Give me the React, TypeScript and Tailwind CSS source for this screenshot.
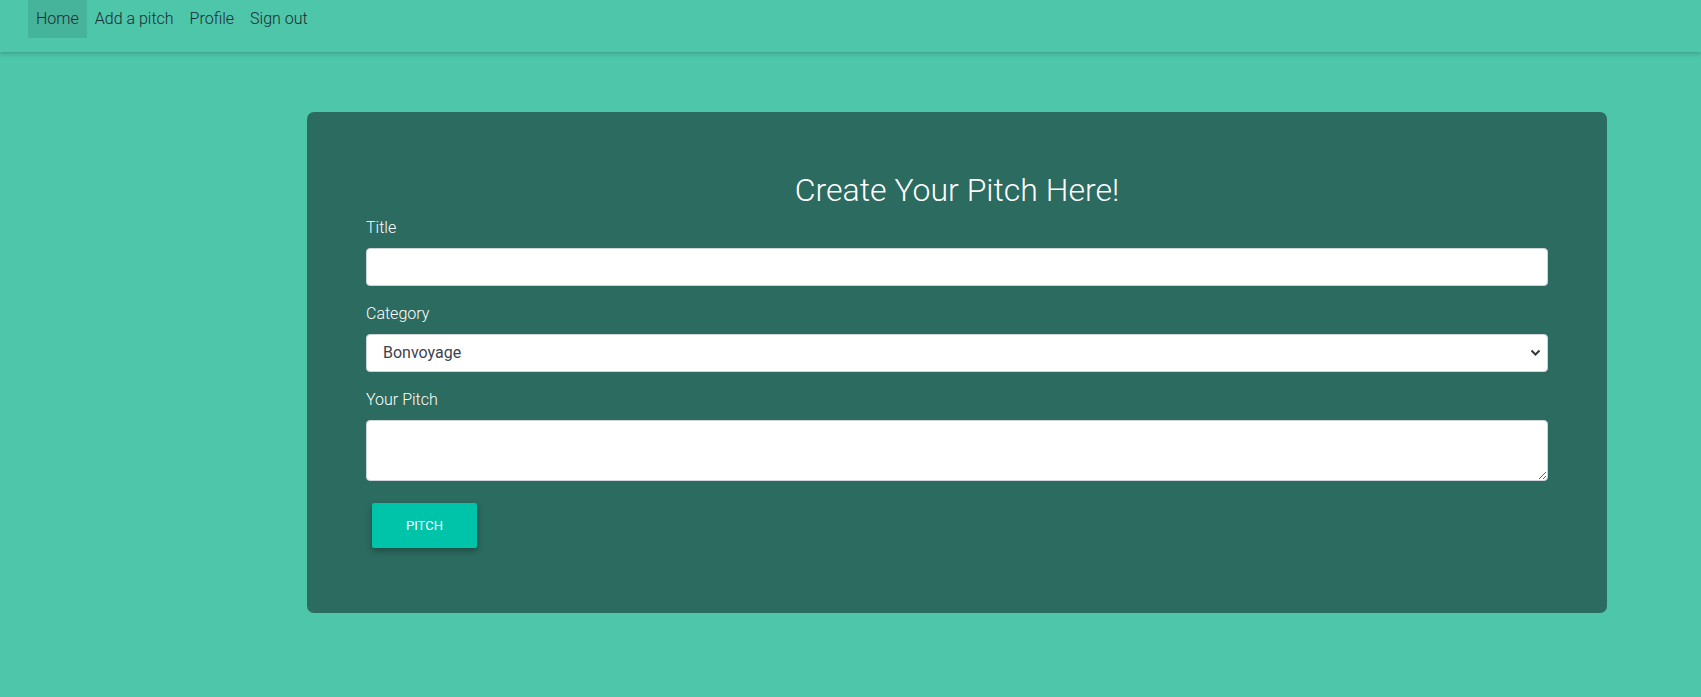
import React from "react";

const font = { fontFamily: "Roboto, 'Noto Sans', sans-serif" };

function NavBar() {
  const links = ["Home", "Add a pitch", "Profile", "Sign out"];
  return (
    <nav className="h-[52px] bg-[#4dc6aa] shadow-[0_2px_4px_rgba(0,0,0,0.18)] pl-[28px] flex items-start">
      {links.map((l, i) => (
        <a
          key={l}
          className={
            "h-[38px] flex items-center px-[8px] text-[16px] font-light text-[#1d2a33] " +
            (i === 0 ? "bg-[#45b49a]" : "")
          }
        >
          {l}
        </a>
      ))}
    </nav>
  );
}

export default function App() {
  return (
    <div className="min-h-[697px] bg-[#4dc6aa]" style={font}>
      <NavBar />
      <div className="pl-[307px] pt-[60px]">
        <div className="w-[1300px] h-[501px] rounded-[7px] bg-[#2c6b5f] px-[59px] pt-[58px]">
          <h2 className="text-center text-white font-light text-[32px] leading-[40px]">
            Create Your Pitch Here!
          </h2>
          <form className="flex flex-col">
            <label className="mt-[8px] text-[16px] font-light text-white leading-[20px]">Title</label>
            <input className="mt-[10px] h-[38px] bg-white rounded-[4px] border border-[#ced4da]" />
            <label className="mt-[18px] text-[16px] font-light text-white leading-[20px]">Category</label>
            <div className="mt-[10px] relative h-[38px] bg-white rounded-[4px] border border-[#ced4da] flex items-center pl-[16px]">
              <span className="text-[16px] text-[#3b4350]">Bonvoyage</span>
              <svg className="absolute right-[6px] top-[14px]" width="11" height="8" viewBox="0 0 11 8">
                <path d="M1.5 1.5 L5.5 5.5 L9.5 1.5" fill="none" stroke="#343a40" strokeWidth="2" />
              </svg>
            </div>
            <label className="mt-[18px] text-[16px] font-light text-white leading-[20px]">Your Pitch</label>
            <textarea className="mt-[10px] h-[61px] bg-white rounded-[4px] border border-[#ced4da]" />
            <div className="pl-[6px] pt-[22px]">
              <button
                type="button"
                className="w-[105px] h-[45px] rounded-[2px] bg-[#00c4aa] text-white text-[13px] shadow-[0_3px_6px_rgba(0,0,0,0.3)]"
              >
                PITCH
              </button>
            </div>
          </form>
        </div>
      </div>
    </div>
  );
}
